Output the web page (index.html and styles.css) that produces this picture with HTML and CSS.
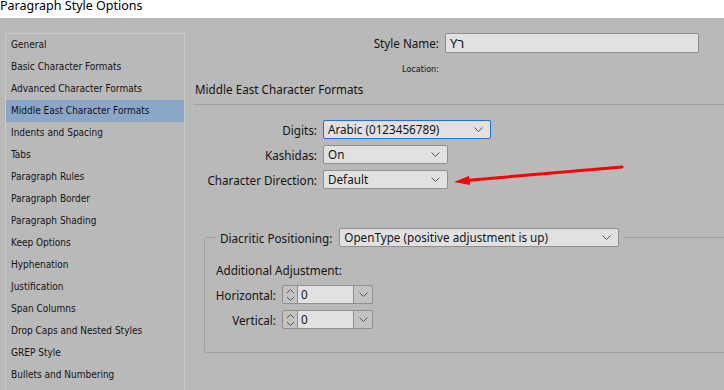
FILE: index.html
```html
<!DOCTYPE html>
<html>
<head>
<meta charset="utf-8">
<link rel="stylesheet" href="styles.css">
</head>
<body>
<div class="titlebar"><span class="title">Paragraph Style Options</span></div>
<div class="main">
  <ul class="sidebar">
    <li>General</li>
    <li>Basic Character Formats</li>
    <li>Advanced Character Formats</li>
    <li class="selected">Middle East Character Formats</li>
    <li>Indents and Spacing</li>
    <li>Tabs</li>
    <li>Paragraph Rules</li>
    <li>Paragraph Border</li>
    <li>Paragraph Shading</li>
    <li>Keep Options</li>
    <li>Hyphenation</li>
    <li>Justification</li>
    <li>Span Columns</li>
    <li>Drop Caps and Nested Styles</li>
    <li>GREP Style</li>
    <li>Bullets and Numbering</li>
  </ul>
  <div class="panel">
    <div class="name-row">
      <span class="label">Style Name:</span>
      <div class="textbox">Yר</div>
    </div>
    <div class="location-row"><span class="location">Location:</span></div>
    <div class="heading">Middle East Character Formats</div>
    <div class="separator"></div>
    <div class="form">
      <span class="label">Digits:</span>
      <div class="select wide focused"><span>Arabic (0123456789)</span><svg class="chev" width="9" height="5" viewBox="0 0 9 5"><polyline points="0.5,0.5 4.5,4.5 8.5,0.5" fill="none" stroke="#555" stroke-width="1"/></svg></div>
      <span class="label">Kashidas:</span>
      <div class="select"><span>On</span><svg class="chev" width="9" height="5" viewBox="0 0 9 5"><polyline points="0.5,0.5 4.5,4.5 8.5,0.5" fill="none" stroke="#555" stroke-width="1"/></svg></div>
      <span class="label">Character Direction:</span>
      <div class="select"><span>Default</span><svg class="chev" width="9" height="5" viewBox="0 0 9 5"><polyline points="0.5,0.5 4.5,4.5 8.5,0.5" fill="none" stroke="#555" stroke-width="1"/></svg></div>
    </div>
    <fieldset class="group">
      <legend class="legend">
        <span class="label">Diacritic Positioning:</span>
        <div class="select legend-select"><span>OpenType (positive adjustment is up)</span><svg class="chev" width="9" height="5" viewBox="0 0 9 5"><polyline points="0.5,0.5 4.5,4.5 8.5,0.5" fill="none" stroke="#555" stroke-width="1"/></svg></div>
      </legend>
      <div class="sub">Additional Adjustment:</div>
      <div class="adjust">
        <span class="label">Horizontal:</span>
        <div class="spinner">
          <div class="spin"><svg width="9" height="14" viewBox="0 0 9 14"><polyline points="1,5 4.5,1.5 8,5" fill="none" stroke="#555" stroke-width="1"/><polyline points="1,9 4.5,12.5 8,9" fill="none" stroke="#555" stroke-width="1"/></svg></div>
          <div class="value">0</div>
          <div class="drop"><svg width="9" height="5" viewBox="0 0 9 5"><polyline points="0.5,0.5 4.5,4.5 8.5,0.5" fill="none" stroke="#555" stroke-width="1"/></svg></div>
        </div>
        <span class="label">Vertical:</span>
        <div class="spinner">
          <div class="spin"><svg width="9" height="14" viewBox="0 0 9 14"><polyline points="1,5 4.5,1.5 8,5" fill="none" stroke="#555" stroke-width="1"/><polyline points="1,9 4.5,12.5 8,9" fill="none" stroke="#555" stroke-width="1"/></svg></div>
          <div class="value">0</div>
          <div class="drop"><svg width="9" height="5" viewBox="0 0 9 5"><polyline points="0.5,0.5 4.5,4.5 8.5,0.5" fill="none" stroke="#555" stroke-width="1"/></svg></div>
        </div>
      </div>
    </fieldset>
  </div>
</div>
<svg class="arrow" width="724" height="390" viewBox="0 0 724 390">
  <line x1="622" y1="167" x2="466" y2="180.5" stroke="#f00" stroke-width="3" stroke-linecap="round"/>
  <polygon points="454,182 469,176 470,185" fill="#f00"/>
</svg>
</body>
</html>
```

FILE: styles.css
```css
* { box-sizing: border-box; }
html, body {
  margin: 0;
  padding: 0;
}
body {
  width: 724px;
  height: 390px;
  overflow: hidden;
  background: #b9b9b9;
  font-family: "Noto Sans", "Liberation Sans", Arial, sans-serif;
  font-size: 11.7px;
  color: #141414;
  position: relative;
}
.titlebar {
  height: 18px;
  background: #ffffff;
  overflow: hidden;
}
.title {
  display: block;
  margin-top: -4px;
  line-height: 20px;
  font-size: 12.5px;
  color: #000;
}
.main {
  display: flex;
  height: 372px;
  overflow: hidden;
}
.sidebar {
  list-style: none;
  margin: 15px 0 0 5px;
  padding: 0;
  width: 180px;
  height: 380px;
  border: 1px solid #cacaca;
  flex: none;
  font-family: "DejaVu Sans Condensed", "DejaVu Sans", sans-serif;
  font-size: 10px;
}
.sidebar li {
  height: 22px;
  line-height: 22px;
  padding-left: 5px;
  white-space: nowrap;
}
.sidebar li.selected {
  background: #8aa7c8;
}
.panel {
  flex: 1;
  display: flex;
  flex-direction: column;
  padding-left: 10px;
  min-width: 0;
}
.label {
  white-space: nowrap;
}
.name-row {
  margin-top: 15px;
  height: 20px;
  display: flex;
  justify-content: flex-end;
  align-items: center;
  gap: 6px;
  padding-right: 25px;
}
.textbox {
  width: 254px;
  height: 20px;
  background: #e1e1e1;
  border: 1px solid #8f8f8f;
  border-radius: 2px;
  padding-left: 4px;
  line-height: 18px;
  font-size: 13px;
}
.location-row {
  margin-top: 10px;
  height: 12px;
  display: flex;
  justify-content: flex-end;
  padding-right: 285px;
}
.location {
  font-family: "DejaVu Sans Condensed", "DejaVu Sans", sans-serif;
  font-size: 9px;
  line-height: 12px;
}
.heading {
  margin-top: 6px;
  line-height: 16px;
  height: 16px;
}
.separator {
  margin-top: 7px;
  margin-left: -1px;
  height: 1px;
  background: #a2a2a2;
}
.form {
  margin-top: 15px;
  display: grid;
  grid-template-columns: 122px auto;
  column-gap: 6px;
  row-gap: 6px;
  justify-items: start;
  align-items: center;
}
.form .label {
  justify-self: end;
}
.select {
  height: 19px;
  width: 125px;
  background: #e1e1e1;
  border: 1px solid #8f8f8f;
  border-radius: 2px;
  display: flex;
  align-items: center;
  justify-content: space-between;
  padding: 0 7px 0 4px;
  white-space: nowrap;
  line-height: 17px;
}
.select.wide {
  width: 168px;
}
.select.focused {
  border-color: #1a73d6;
}
.chev {
  flex: none;
}
.group {
  margin: 39px -20px 0 9px;
  padding: 0 11px 23px 11px;
  border: 1px solid #a0a0a0;
  border-radius: 3px;
  min-width: 0;
}
.legend {
  padding: 0 4px;
  display: flex;
  align-items: center;
  gap: 7px;
}
.legend-select {
  width: 280px;
}
.sub {
  margin-top: 15px;
  line-height: 16px;
}
.adjust {
  margin-top: 7px;
  display: grid;
  grid-template-columns: 60px auto;
  column-gap: 6px;
  row-gap: 6px;
  align-items: center;
  justify-items: start;
}
.adjust .label {
  justify-self: end;
}
.spinner {
  width: 91px;
  height: 19px;
  display: flex;
  border: 1px solid #8f8f8f;
  border-radius: 2px;
  background: #c3c3c3;
  overflow: hidden;
}
.spin {
  width: 15px;
  display: flex;
  align-items: center;
  justify-content: center;
  border-right: 1px solid #8f8f8f;
}
.value {
  width: 56px;
  background: #e1e1e1;
  line-height: 17px;
  padding-left: 3px;
  border-right: 1px solid #8f8f8f;
}
.drop {
  flex: 1;
  display: flex;
  align-items: center;
  justify-content: center;
}
.arrow {
  position: absolute;
  left: 0;
  top: 0;
  pointer-events: none;
}
```
